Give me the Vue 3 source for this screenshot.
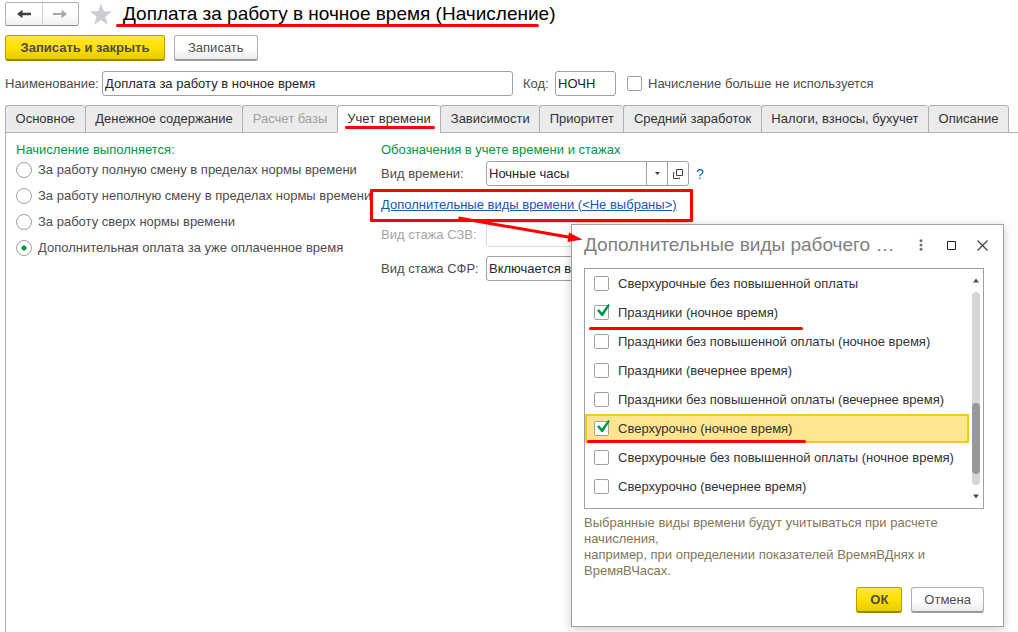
<script setup>
import { ref } from 'vue'

const name = ref('Доплата за работу в ночное время')
const code = ref('НОЧН')
const unused = ref(false)
const tabs = [
  { title: 'Основное' },
  { title: 'Денежное содержание' },
  { title: 'Расчет базы', disabled: true },
  { title: 'Учет времени', active: true },
  { title: 'Зависимости' },
  { title: 'Приоритет' },
  { title: 'Средний заработок' },
  { title: 'Налоги, взносы, бухучет' },
  { title: 'Описание' },
]
const modes = [
  'За работу полную смену в пределах нормы времени',
  'За работу неполную смену в пределах нормы времени',
  'За работу сверх нормы времени',
  'Дополнительная оплата за уже оплаченное время',
]
const mode = ref(3)
const timeKind = ref('Ночные часы')
const szv = ref('')
const sfr = ref('Включается в стаж')
const kinds = ref([
  { title: 'Сверхурочные без повышенной оплаты', checked: false },
  { title: 'Праздники (ночное время)', checked: true, marked: true },
  { title: 'Праздники без повышенной оплаты (ночное время)', checked: false },
  { title: 'Праздники (вечернее время)', checked: false },
  { title: 'Праздники без повышенной оплаты (вечернее время)', checked: false },
  { title: 'Сверхурочно (ночное время)', checked: true, marked: true, current: true },
  { title: 'Сверхурочные без повышенной оплаты (ночное время)', checked: false },
  { title: 'Сверхурочно (вечернее время)', checked: false },
])
</script>

<template>
  <div class="window">
    <header class="titlebar">
      <div class="history">
        <button type="button" aria-label="Назад">
          <svg width="14" height="10" viewBox="0 0 14 10"><path d="M0 5 L5.500 0.800 V3.800 H14 V6.200 H5.500 V9.200 Z" fill="#404040" /></svg>
        </button>
        <button type="button" aria-label="Вперед">
          <svg width="14" height="10" viewBox="0 0 14 10"><path d="M14 5 L8.500 0.800 V4 H0 V6 H8.500 V9.200 Z" fill="#a6a6a6" /></svg>
        </button>
      </div>
      <button type="button" class="star" aria-label="Избранное">
        <svg width="24" height="23" viewBox="0 0 24 23"><path d="M12 0.500 L14.800 8.300 L23 8.500 L16.500 13.600 L18.800 21.700 L12 17 L5.200 21.700 L7.500 13.600 L1 8.500 L9.200 8.300 Z" fill="#ccced1" /></svg>
      </button>
      <h1>Доплата за работу в ночное время (Начисление)</h1>
    </header>

    <div class="commands">
      <button type="button" class="btn primary save">Записать и закрыть</button>
      <button type="button" class="btn">Записать</button>
    </div>

    <div class="fields">
      <label for="name" class="name-label">Наименование:</label>
      <input id="name" v-model="name" class="box name" type="text" />
      <label for="code" class="code-label">Код:</label>
      <input id="code" v-model="code" class="box code" type="text" />
      <label class="check"><input v-model="unused" type="checkbox" />Начисление больше не используется</label>
    </div>

    <nav class="tabs">
      <button
        v-for="tab in tabs"
        :key="tab.title"
        type="button"
        class="tab"
        :class="{ active: tab.active }"
        :disabled="tab.disabled"
      >{{ tab.title }}</button>
    </nav>

    <main class="panel">
      <fieldset class="modes">
        <legend>Начисление выполняется:</legend>
        <label v-for="(item, i) in modes" :key="item" class="radio">
          <input v-model="mode" type="radio" name="mode" :value="i" />{{ item }}
        </label>
      </fieldset>

      <section class="marks">
        <h2>Обозначения в учете времени и стажах</h2>
        <div class="row first">
          <label for="kind">Вид времени:</label>
          <div class="combo">
            <input id="kind" v-model="timeKind" type="text" />
            <button type="button" aria-label="Выбрать">
              <svg width="7" height="4" viewBox="0 0 7 4"><path d="M1 0 H6 L3.500 3 Z" fill="#404040" /></svg>
            </button>
            <button type="button" aria-label="Открыть">
              <svg width="10" height="10" viewBox="0 0 10 10"><path d="M3.500 0.500 H9.500 V6.500 H3.500 Z M1.500 3.500 H0.500 V9.500 H6.500 V8.500" fill="none" stroke="#404040" /></svg>
            </button>
          </div>
          <a href="#" class="help">?</a>
        </div>
        <div class="link-row">
          <a href="#">Дополнительные виды времени (&lt;Не выбраны&gt;)</a>
          <svg class="arrow" width="128" height="30" viewBox="0 0 128 30">
            <path d="M1.500 2 L114 21.500" stroke="#fe0000" stroke-width="3" />
            <path d="M112 16.500 L125.500 23.500 L110.500 26 Z" fill="#fe0000" />
          </svg>
        </div>
        <div class="row szv">
          <label for="szv">Вид стажа СЗВ:</label>
          <div class="combo">
            <input id="szv" v-model="szv" type="text" disabled />
            <button type="button" disabled aria-label="Выбрать вид стажа СЗВ"></button>
          </div>
        </div>
        <div class="row">
          <label for="sfr">Вид стажа СФР:</label>
          <div class="combo">
            <input id="sfr" v-model="sfr" type="text" />
          </div>
        </div>
      </section>
    </main>

    <div class="dialog" role="dialog" aria-labelledby="dialog-title">
      <div class="dialog-head">
        <h2 id="dialog-title">Дополнительные виды рабочего …</h2>
        <button type="button" aria-label="Еще">
          <svg width="12" height="12" viewBox="0 0 12 12" fill="#707070"><circle cx="6" cy="1.700" r="1.500" /><circle cx="6" cy="6" r="1.500" /><circle cx="6" cy="10.300" r="1.500" /></svg>
        </button>
        <button type="button" aria-label="Развернуть">
          <svg width="9" height="9" viewBox="0 0 9 9"><path d="M0.500 0.500 H8.500 V8.500 H0.500 Z" fill="none" stroke="#202020" /></svg>
        </button>
        <button type="button" aria-label="Закрыть">
          <svg width="11" height="11" viewBox="0 0 11 11"><path d="M0.500 0.500 L10.500 10.500 M10.500 0.500 L0.500 10.500" stroke="#404040" stroke-width="1.200" /></svg>
        </button>
      </div>

      <div class="list">
        <div class="items">
          <label
            v-for="kind in kinds"
            :key="kind.title"
            class="check item"
            :class="{ current: kind.current, marked: kind.marked }"
          ><input v-model="kind.checked" type="checkbox" />{{ kind.title }}</label>
        </div>
        <div class="scroll">
          <svg width="6" height="5" viewBox="0 0 6 5"><path d="M0 4.500 L3 0.500 L6 4.500 Z" fill="#505050" /></svg>
          <div class="track"><div class="thumb"></div></div>
          <svg width="6" height="5" viewBox="0 0 6 5"><path d="M0 0.500 L3 4.500 L6 0.500 Z" fill="#505050" /></svg>
        </div>
      </div>

      <p class="hint">Выбранные виды времени будут учитываться при расчете начисления,<br />например, при определении показателей ВремяВДнях и ВремяВЧасах.</p>

      <div class="dialog-foot">
        <button type="button" class="btn primary">ОК</button>
        <button type="button" class="btn">Отмена</button>
      </div>
    </div>
  </div>
</template>

<style>
body {
  background: #fff;
}
</style>

<style scoped>
.window,
.window * {
  box-sizing: border-box;
}
.window {
  position: relative;
  display: flex;
  flex-direction: column;
  min-height: 100vh;
  overflow: hidden;
  color: #4d4d4d;
  font: 13px/16px "Liberation Sans", Arial, sans-serif;
}
button,
input {
  margin: 0;
  padding: 0;
  font: inherit;
  color: inherit;
}
button {
  display: flex;
  align-items: center;
  justify-content: center;
  border: 0;
  background: none;
  white-space: nowrap;
}
h1,
h2,
p {
  margin: 0;
  font-weight: normal;
}
svg {
  display: block;
  flex: none;
}
.titlebar {
  display: flex;
  align-items: center;
  height: 28px;
  padding-left: 5px;
}
.history {
  display: flex;
  width: 74px;
  height: 24px;
  border: 1px solid #b0b0b0;
  border-bottom-color: #8c8c8c;
  border-radius: 2px;
  background: linear-gradient(#fff 50%, #f0f0f0);
}
.history button {
  flex: 1;
}
.history button + button {
  border-left: 1px solid #d0d0d0;
}
.star {
  margin: 0 10px;
}
h1 {
  position: relative;
  color: #000;
  font-size: 19px;
  line-height: 24px;
  white-space: nowrap;
}
h1::after {
  content: "";
  position: absolute;
  left: -7px;
  right: 16px;
  bottom: -1px;
  height: 3px;
  border-radius: 2px;
  background: #fe0000;
}
.commands {
  display: flex;
  gap: 9px;
  padding: 7px 5px 10px;
}
.btn {
  height: 26px;
  padding: 0 13px;
  border: 1px solid #b0b0b0;
  border-bottom: 2px solid #999;
  border-radius: 3px;
  background: linear-gradient(#fff 50%, #ebebeb);
}
.btn.primary {
  border-color: #b8a000;
  border-bottom-color: #998500;
  background: linear-gradient(#ffe838, #ffe000 50%, #e8ca00);
  font-weight: bold;
}
.save {
  min-width: 160px;
}
.fields {
  display: flex;
  align-items: center;
  padding-left: 5px;
}
.name-label {
  width: 97px;
}
.box {
  height: 25px;
  padding: 0 2px;
  border: 1px solid #a0a0a0;
  border-radius: 3px;
  background: #fff;
  color: #262626;
}
.name {
  width: 411px;
}
.code-label {
  width: 32px;
  margin-left: 10px;
}
.code {
  width: 61px;
  margin-right: 11px;
}
.check {
  display: flex;
  align-items: center;
  gap: 6px;
  white-space: nowrap;
}
.check input {
  position: relative;
  flex: none;
  width: 15px;
  height: 15px;
  appearance: none;
  border: 1px solid #a0a0a0;
  border-radius: 2px;
  background: #fff;
}
.check input:checked::after {
  content: "";
  position: absolute;
  left: 2px;
  top: -2px;
  width: 13px;
  height: 12px;
  background: #009646;
  clip-path: polygon(0 54%, 16% 44%, 38% 70%, 86% 0, 100% 8%, 46% 100%, 34% 100%);
}
.tabs {
  display: flex;
  margin-top: 9px;
  padding: 0 9px 0 5px;
  background: linear-gradient(#b0b0b0, #b0b0b0) 5px 100% / 100% 1px no-repeat;
}
.tab {
  flex: 1 1 auto;
  height: 28px;
  padding: 0 8px;
  border: 1px solid #b0b0b0;
  border-right-width: 0;
  border-radius: 3px 3px 0 0;
  background: #ebebeb;
  color: #333;
}
.tab:last-child {
  border-right-width: 1px;
}
.tab:disabled {
  color: #a0a0a0;
}
.tab.active {
  position: relative;
  border-bottom-color: #fff;
  background: #fff;
}
.tab.active::after {
  content: "";
  position: absolute;
  left: 7px;
  right: 5px;
  bottom: 3px;
  height: 3px;
  border-radius: 2px;
  background: #fe0000;
}
.panel {
  display: flex;
  flex: 1;
  margin-left: 5px;
  padding: 9px 10px 8px;
  border-left: 1px solid #b0b0b0;
}
.modes {
  flex: none;
  width: 365px;
  margin: 0;
  padding: 0;
  border: 0;
  white-space: nowrap;
}
legend,
.marks h2 {
  height: 15px;
  padding: 0;
  color: #009646;
  font-size: 13px;
  line-height: 16px;
}
.radio {
  display: flex;
  align-items: center;
  gap: 6px;
  height: 26px;
}
.radio input {
  flex: none;
  width: 16px;
  height: 16px;
  appearance: none;
  border: 1px solid #a0a0a0;
  border-radius: 50%;
}
.radio input:checked {
  background: radial-gradient(circle, #009646 2px, transparent 3px);
}
.marks {
  flex: 1;
}
.row {
  display: flex;
  align-items: center;
  height: 25px;
}
.row.first {
  margin-top: 4px;
}
.row label {
  flex: none;
  width: 105px;
}
.combo {
  display: flex;
  flex: none;
  width: 203px;
  height: 25px;
  border: 1px solid #a0a0a0;
  border-radius: 3px;
}
.combo input {
  flex: 1;
  min-width: 0;
  padding: 0 2px;
  border: 0;
  background: none;
  color: #262626;
}
.combo button {
  width: 21px;
  border-left: 1px solid #a0a0a0;
}
.help {
  margin-left: 7px;
  color: #0070c0;
  font-size: 14px;
  text-decoration: none;
}
.link-row {
  position: relative;
  display: flex;
  align-items: center;
  width: 323px;
  height: 33px;
  margin: 3px 0 0 -11px;
  padding: 0 0 2px 8px;
  border: 3px solid #fe0000;
  border-radius: 1px;
  white-space: nowrap;
}
.link-row a {
  color: #1a55b8;
}
.arrow {
  position: absolute;
  left: 84px;
  top: 24px;
  z-index: 2;
}
.szv {
  margin-bottom: 9px;
  color: #a6a6a6;
}
.szv .combo,
.szv .combo button {
  border-color: #d9d9d9;
}
.dialog {
  position: absolute;
  left: 571px;
  right: 14px;
  top: 224px;
  padding: 0 19px 13px 12px;
  border: 1px solid #a0a0a0;
  background: #fff;
  box-shadow: 0 2px 10px rgba(0, 0, 0, 0.2);
}
.dialog-head {
  display: flex;
  align-items: center;
  height: 43px;
  padding-bottom: 3px;
}
.dialog-head h2 {
  flex: 1;
  color: #808080;
  font-size: 19px;
  line-height: 24px;
  white-space: nowrap;
}
.dialog-head button {
  width: 31px;
  height: 24px;
}
.dialog-head button:last-child {
  margin-right: -14px;
}
.list {
  display: flex;
  border: 1px solid #a0a0a0;
}
.items {
  flex: 1;
  padding-bottom: 7px;
}
.item {
  position: relative;
  gap: 9px;
  height: 29px;
  padding-left: 9px;
  color: #333;
}
.item.current {
  padding-left: 7px;
  border: 2px solid #f8c820;
  background: #ffe58f;
}
.item.marked::after {
  content: "";
  position: absolute;
  left: 4px;
  bottom: -3px;
  width: 214px;
  height: 3px;
  border-radius: 2px;
  background: #fe0000;
}
.item.current.marked::after {
  left: 0;
  bottom: -2px;
  width: 219px;
}
.scroll {
  display: flex;
  flex-direction: column;
  align-items: center;
  justify-content: space-between;
  width: 14px;
  padding: 9px 0;
}
.track {
  display: flex;
  flex: 1;
  flex-direction: column;
  width: 8px;
  margin: 9px 0;
  padding-top: 111px;
  border-radius: 4px;
  background: #d6d6d6;
}
.thumb {
  height: 71px;
  border-radius: 4px;
  background: #999;
}
.hint {
  margin-top: 6px;
  color: #807859;
}
.dialog-foot {
  display: flex;
  justify-content: flex-end;
  gap: 9px;
  margin-top: 8px;
}
.dialog-foot .btn {
  padding: 0 12px;
}
.dialog-foot .primary {
  min-width: 46px;
}
</style>
